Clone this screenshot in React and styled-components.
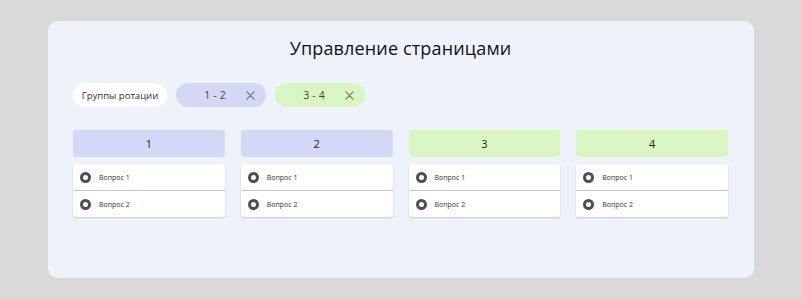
import React from 'react';
import styled, { createGlobalStyle } from 'styled-components';

const GlobalStyle = createGlobalStyle`
  html, body {
    margin: 0;
    padding: 0;
    background: #d9d9d9;
  }
  body {
    font-family: 'Open Sans', 'Noto Sans', sans-serif;
    color: #1f1f1f;
  }
`;

const Page = styled.div`
  padding: 21px 47px 21px 48px;
`;

const Panel = styled.div`
  background: #eef3fb;
  border-radius: 10px;
  height: 257px;
  box-sizing: border-box;
  padding: 14px 26px 0 25px;
`;

const Title = styled.h1`
  margin: 0;
  text-align: center;
  font-size: 18px;
  font-weight: 400;
  line-height: 26px;
  letter-spacing: 0.15px;
  color: #111;
`;

const ChipRow = styled.div`
  display: flex;
  gap: 9px;
  margin-top: 22px;
`;

const Chip = styled.div`
  display: flex;
  align-items: center;
  justify-content: ${p => (p.$closable ? 'flex-end' : 'center')};
  box-sizing: border-box;
  height: 24px;
  width: ${p => p.$width}px;
  padding: ${p => (p.$closable ? '0 11px 0 0' : '0')};
  border-radius: 12px;
  background: ${p => p.$bg};
  font-size: ${p => (p.$closable ? '10.5px' : '9.5px')};
  color: #333;
`;

const ChipLabel = styled.span`
  margin-right: 20px;
  color: #444;
  letter-spacing: 0.2px;
`;

const Close = styled.svg`
  width: 9px;
  height: 9px;
  display: block;
`;

const Columns = styled.div`
  display: grid;
  grid-template-columns: repeat(4, 1fr);
  column-gap: 16px;
  margin-top: 23px;
`;

const Column = styled.div`
  display: flex;
  flex-direction: column;
  gap: 7px;
`;

const Header = styled.div`
  height: 27px;
  display: flex;
  align-items: center;
  justify-content: center;
  border-radius: 3px;
  background: ${p => p.$bg};
  font-size: 11px;
  color: #222;
`;

const Card = styled.div`
  background: #fff;
  border-radius: 3px;
  box-shadow: 0 1px 2px rgba(0, 0, 0, 0.18);
`;

const Row = styled.div`
  height: 26px;
  display: flex;
  align-items: center;
  padding-left: 7px;
  gap: 8px;
  font-size: 7px;
  color: #333;
  & + & {
    border-top: 1px solid #c8c8c8;
  }
`;

const Radio = styled.span`
  width: 11px;
  height: 11px;
  box-sizing: border-box;
  border-radius: 50%;
  border: 3.5px solid #4d4d5c;
  background: #fff;
`;

const CloseIcon = () => (
  <Close viewBox="0 0 10 10">
    <path d="M1 1L9 9M9 1L1 9" stroke="#777" strokeWidth="1.4" strokeLinecap="round" />
  </Close>
);

const groups = [
  { label: '1 - 2', bg: '#d4d7f5' },
  { label: '3 - 4', bg: '#d8f5c2' },
];

const columns = [
  { n: 1, bg: '#d4d7f5' },
  { n: 2, bg: '#d4d7f5' },
  { n: 3, bg: '#d8f5c2' },
  { n: 4, bg: '#d8f5c2' },
];

export default function App() {
  return (
    <Page>
      <GlobalStyle />
      <Panel>
        <Title>Управление страницами</Title>
        <ChipRow>
          <Chip $bg="#fff" $width={94}>Группы ротации</Chip>
          {groups.map(g => (
            <Chip key={g.label} $bg={g.bg} $width={90} $closable>
              <ChipLabel>{g.label}</ChipLabel>
              <CloseIcon />
            </Chip>
          ))}
        </ChipRow>
        <Columns>
          {columns.map(c => (
            <Column key={c.n}>
              <Header $bg={c.bg}>{c.n}</Header>
              <Card>
                <Row>
                  <Radio />
                  Вопрос 1
                </Row>
                <Row>
                  <Radio />
                  Вопрос 2
                </Row>
              </Card>
            </Column>
          ))}
        </Columns>
      </Panel>
    </Page>
  );
}
